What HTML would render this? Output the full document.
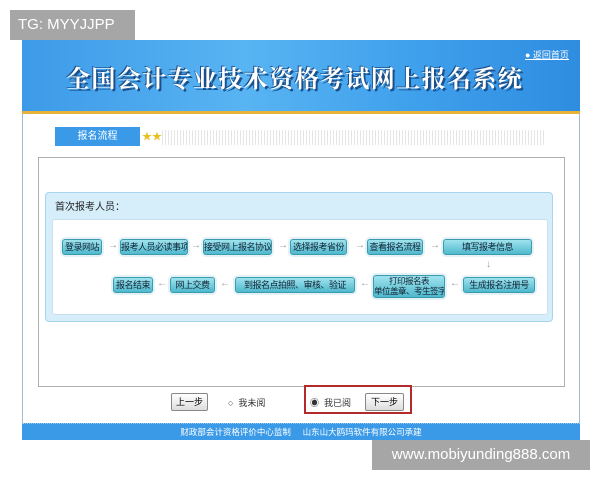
<!DOCTYPE html>
<html><head><meta charset="utf-8"><style>
*{margin:0;padding:0;box-sizing:border-box}
body{width:600px;height:480px;background:#fff;position:relative;overflow:hidden;font-family:"Liberation Sans","Noto Sans CJK SC",sans-serif}
.a{position:absolute;white-space:nowrap}
.tg{left:10px;top:10px;width:125px;height:30px;background:#a6a6a6;color:#fff;font-size:15px;line-height:30px;padding-left:8px}
.wm{left:372px;top:440px;width:218px;height:30px;background:#a6a6a6;color:#fff;font-size:15px;line-height:30px;text-align:center}
.frame{left:22px;top:40px;width:558px;height:400px;border:1px solid #9bbcd4;background:#fff}
.banner{left:22px;top:40px;width:558px;height:74px;background:linear-gradient(90deg,#3d9ae8,#58b4f2 40%,#3fa0ec 70%,#2f8de0);border-bottom:3px solid #e6b23a}
.title{left:66px;top:59px;font-family:"Noto Serif CJK SC",serif;font-weight:bold;font-size:24px;color:#fff;letter-spacing:1.4px;text-shadow:2px 2px 0 #1b4f8a,-1px -1px 0 #1b4f8a}
.home{left:525px;top:48px;font-size:9px;color:#fff;text-decoration:underline}
.tab{left:55px;top:127px;width:85px;height:19px;background:#3a9ae8;color:#fff;font-size:10px;text-align:center;line-height:19px}
.dots{left:162px;top:130px;width:384px;height:15px;background:repeating-linear-gradient(90deg,#e6e6e6 0 1px,#fff 1px 3px)}
.box{left:38px;top:157px;width:527px;height:230px;border:1px solid #b0b0b0}
.panel{left:45px;top:192px;width:508px;height:130px;background:#d6eefa;border:1px solid #a8d4ec;border-radius:4px}
.ptitle{left:55px;top:198px;font-size:10px;color:#222}
.inner{left:52px;top:219px;width:496px;height:96px;background:#fff;border:1px solid #c8e0ee;border-radius:3px}
.b{position:absolute;white-space:nowrap;overflow:hidden;height:16px;background:linear-gradient(#9fe3ee,#4fb8cc);border:1px solid #3a9bb0;border-radius:3px;font-size:9px;letter-spacing:-0.5px;color:#123;text-align:center;line-height:14px;box-shadow:0 0 0 2px #e4f2f6}
.ar{position:absolute;font-size:10px;color:#999}
.btn{position:absolute;height:18px;border:1px solid #888;background:linear-gradient(#fff,#ddd);font-size:9px;line-height:16px;text-align:center;border-radius:2px}
.red{left:304px;top:385px;width:108px;height:29px;border:2px solid #b32a2a}
.foot{left:22px;top:423px;width:558px;height:17px;background:#3a9ae8;color:#fff;font-size:8.5px;line-height:17px;text-align:center;border-top:1px dotted #9ccae8}
</style></head><body>
<div class="a frame"></div>
<div class="a banner"></div>
<div class="a title">全国会计专业技术资格考试网上报名系统</div>
<div class="a home">● 返回首页</div>
<div class="a tab">报名流程</div>
<div class="a" style="left:142px;top:128px;color:#e8c020;font-size:10px">★★</div>
<div class="a dots"></div>
<div class="a box"></div>
<div class="a panel"></div>
<div class="a ptitle">首次报考人员：</div>
<div class="a inner"></div>
<div class="b" style="left:62px;top:239px;width:40px">登录网站</div>
<div class="ar" style="left:108px;top:240px">→</div>
<div class="b" style="left:120px;top:239px;width:68px">报考人员必读事项</div>
<div class="ar" style="left:191px;top:240px">→</div>
<div class="b" style="left:203px;top:239px;width:69px">接受网上报名协议</div>
<div class="ar" style="left:278px;top:240px">→</div>
<div class="b" style="left:290px;top:239px;width:57px">选择报考省份</div>
<div class="ar" style="left:355px;top:240px">→</div>
<div class="b" style="left:367px;top:239px;width:56px">查看报名流程</div>
<div class="ar" style="left:430px;top:240px">→</div>
<div class="b" style="left:443px;top:239px;width:89px">填写报考信息</div>
<div class="ar" style="left:486px;top:259px">↓</div>
<div class="b" style="left:113px;top:277px;width:40px">报名结束</div>
<div class="ar" style="left:157px;top:278px">←</div>
<div class="b" style="left:170px;top:277px;width:45px">网上交费</div>
<div class="ar" style="left:220px;top:278px">←</div>
<div class="b" style="left:235px;top:277px;width:120px">到报名点拍照、审核、验证</div>
<div class="ar" style="left:360px;top:278px">←</div>
<div class="b" style="left:373px;top:275px;width:72px;height:23px;line-height:10px;font-size:8.5px">打印报名表<br>单位盖章、考生签字</div>
<div class="ar" style="left:450px;top:278px">←</div>
<div class="b" style="left:463px;top:277px;width:72px">生成报名注册号</div>
<div class="btn" style="left:171px;top:393px;width:37px">上一步</div>
<div class="a" style="left:228px;top:396px;font-size:9px;color:#333">○ &nbsp;我未阅</div>
<div class="a red"></div>
<div class="a" style="left:310px;top:396px;font-size:9px;color:#333">◉ &nbsp;我已阅</div>
<div class="btn" style="left:365px;top:393px;width:39px">下一步</div>
<div class="a foot">财政部会计资格评价中心监制 &nbsp;&nbsp;&nbsp; 山东山大鸥玛软件有限公司承建</div>
<div class="a tg">TG: MYYJJPP</div>
<div class="a wm">www.mobiyunding888.com</div>
</body></html>
